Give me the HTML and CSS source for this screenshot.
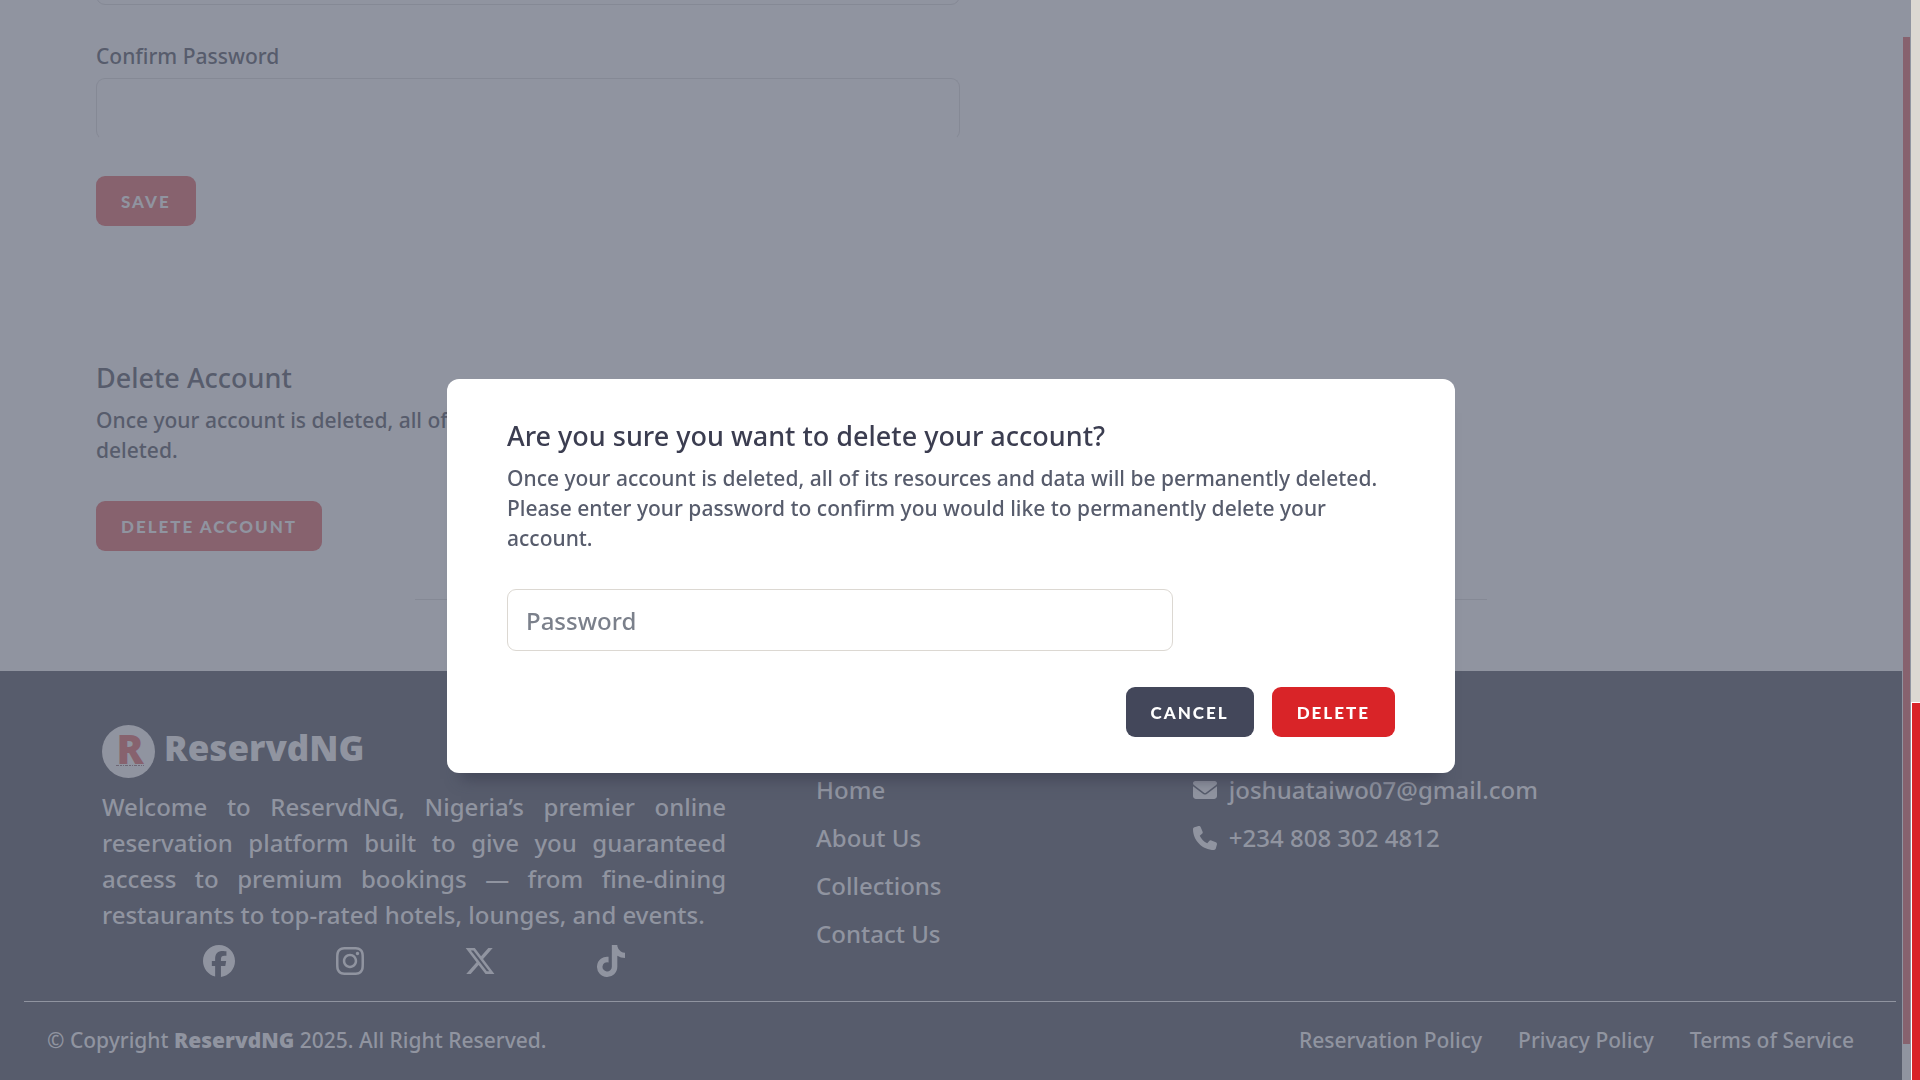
FILE: index.html
```html
<!DOCTYPE html>
<html lang="en">
<head>
<meta charset="utf-8">
<title>ReservdNG - Profile</title>
<link rel="stylesheet" href="styles.css">
</head>
<body>
<div class="shell">
  <div class="page">
    <main class="content">
      <form class="section">
        <input class="field" type="password" aria-label="New Password">
        <label class="label" for="confirm-password">Confirm Password</label>
        <input class="field open" id="confirm-password" type="password">
        <button class="btn muted" type="button">SAVE</button>
      </form>
      <section class="section">
        <h2 class="title">Delete Account</h2>
        <p class="copy">Once your account is deleted, all of its resources and data will be permanently deleted.</p>
        <button class="btn muted" type="button">DELETE ACCOUNT</button>
      </section>
      <hr class="divider">
    </main>
    <footer class="footer">
      <div class="columns">
        <div class="about">
          <a class="brand" href="#">
            <svg class="logo" viewBox="0 0 53 53" aria-hidden="true"><circle cx="26.500" cy="26.500" r="26.500" fill="#9094a0"/><text class="logo-letter" x="28" y="39" text-anchor="middle">R</text><path d="M14 40.500h28" stroke="#6d6775" stroke-dasharray="3 1 2 1 1 1"/></svg>
            <span>ReservdNG</span>
          </a>
          <p class="blurb">Welcome to ReservdNG, Nigeria’s premier online reservation platform built to give you guaranteed access to premium bookings — from fine-dining restaurants to top-rated hotels, lounges, and events.</p>
          <nav class="social" aria-label="Social">
            <a href="#" aria-label="Facebook"><svg viewBox="0 0 512 512"><path d="M512 256C512 114.600 397.400 0 256 0S0 114.600 0 256c0 120 82.700 220.800 194.200 248.500V334.200h-52.800V256h52.800v-33.700c0-87.100 39.400-127.500 125-127.500 16.200 0 44.200 3.200 55.700 6.400V172c-6-.6-16.500-1-29.600-1-42 0-58.200 15.900-58.200 57.200V256h83.600l-14.400 78.200H287V510C413.800 494.800 512 386.900 512 256z"/></svg></a>
            <a href="#" aria-label="Instagram"><svg viewBox="0 0 448 512"><path d="M224.100 141c-63.600 0-114.900 51.300-114.900 114.900s51.300 114.900 114.900 114.900S339 319.500 339 255.900 287.700 141 224.100 141zm0 189.600c-41.100 0-74.700-33.500-74.700-74.700s33.500-74.700 74.700-74.700 74.700 33.500 74.700 74.700-33.600 74.700-74.700 74.700zm146.400-194.300c0 14.900-12 26.800-26.800 26.800-14.900 0-26.800-12-26.800-26.800s12-26.800 26.800-26.800 26.800 12 26.800 26.800zm76.100 27.200c-1.700-35.900-9.900-67.700-36.200-93.900-26.200-26.200-58-34.400-93.900-36.200-37-2.100-147.900-2.100-184.900 0-35.800 1.700-67.600 9.900-93.900 36.100s-34.400 58-36.200 93.900c-2.100 37-2.100 147.900 0 184.900 1.700 35.900 9.900 67.700 36.200 93.900s58 34.400 93.900 36.200c37 2.100 147.900 2.100 184.900 0 35.900-1.700 67.700-9.900 93.900-36.200 26.200-26.200 34.400-58 36.200-93.900 2.100-37 2.100-147.800 0-184.800zM398.800 388c-7.800 19.600-22.900 34.700-42.600 42.600-29.500 11.700-99.500 9-132.100 9s-102.700 2.600-132.100-9c-19.600-7.800-34.700-22.900-42.600-42.600-11.700-29.500-9-99.500-9-132.100s-2.600-102.700 9-132.100c7.800-19.600 22.900-34.700 42.600-42.600 29.500-11.700 99.500-9 132.100-9s102.700-2.600 132.100 9c19.600 7.800 34.700 22.900 42.600 42.600 11.700 29.500 9 99.500 9 132.100s2.700 102.700-9 132.100z"/></svg></a>
            <a href="#" aria-label="X"><svg viewBox="0 0 512 512"><path d="M389.200 48h70.600L305.600 224.200 487 464H345L233.700 318.600 106.500 464H35.800L200.700 275.500 26.800 48H172.400L272.900 180.900 389.200 48zM364.400 421.800h39.100L151.100 88h-42L364.400 421.800z"/></svg></a>
            <a href="#" aria-label="TikTok"><svg viewBox="0 0 448 512"><path d="M448 209.900a210.100 210.100 0 0 1-122.800-39.300V349.400A162.600 162.600 0 1 1 185 188.300v89.900a74.600 74.600 0 1 0 52.200 71.200V0h88a121.200 121.200 0 0 0 1.900 22.200 122.200 122.200 0 0 0 53.900 80.200 121.400 121.400 0 0 0 67 20.100z"/></svg></a>
          </nav>
        </div>
        <nav class="links" aria-label="Site">
          <a href="#">Home</a>
          <a href="#">About Us</a>
          <a href="#">Collections</a>
          <a href="#">Contact Us</a>
        </nav>
        <address class="links">
          <a href="#"><svg viewBox="0 0 512 512" aria-hidden="true"><path d="M48 64C21.500 64 0 85.500 0 112c0 15.100 7.100 29.300 19.200 38.400L236.800 313.600c11.400 8.500 27 8.500 38.400 0L492.800 150.400c12.100-9.100 19.200-23.300 19.200-38.400 0-26.500-21.500-48-48-48H48zM0 176V384c0 35.300 28.700 64 64 64H448c35.300 0 64-28.700 64-64V176L294.400 339.200c-22.800 17.100-54 17.100-76.800 0L0 176z"/></svg>joshuataiwo07@gmail.com</a>
          <a href="#"><svg viewBox="0 0 512 512" aria-hidden="true"><path d="M164.900 24.600c-7.700-18.600-28-28.500-47.400-23.200l-88 24C12.100 30.200 0 46 0 64 0 311.400 200.600 512 448 512c18 0 33.800-12.100 38.600-29.500l24-88c5.300-19.400-4.600-39.700-23.200-47.400l-96-40c-16.300-6.800-35.200-2.100-46.300 11.600L304.700 368C234.300 334.700 177.300 277.700 144 207.300L193.300 167c13.700-11.200 18.400-30 11.600-46.300l-40-96z"/></svg>+234 808 302 4812</a>
        </address>
      </div>
      <div class="legal">
        <span>© Copyright <strong>ReservdNG</strong> 2025. All Right Reserved.</span>
        <nav class="policies" aria-label="Policies">
          <a href="#">Reservation Policy</a>
          <a href="#">Privacy Policy</a>
          <a href="#">Terms of Service</a>
        </nav>
      </div>
    </footer>
  </div>
  <div class="rail inner" aria-hidden="true"><div class="thumb"></div></div>
  <div class="rail outer" aria-hidden="true"><div class="thumb"></div></div>
</div>
<div class="overlay">
  <form class="modal" role="dialog" aria-labelledby="modal-title">
    <h2 class="title" id="modal-title">Are you sure you want to delete your account?</h2>
    <p class="copy">Once your account is deleted, all of its resources and data will be permanently deleted. Please enter your password to confirm you would like to permanently delete your account.</p>
    <input class="field" type="password" placeholder="Password" aria-label="Password">
    <div class="actions">
      <button class="btn dark" type="button">CANCEL</button>
      <button class="btn danger" type="button">DELETE</button>
    </div>
  </form>
</div>
</body>
</html>
```
FILE: styles.css
```css
* { box-sizing: border-box; }
body {
  margin: 0;
  overflow: hidden;
  font-family: "Noto Sans", sans-serif;
  font-size: 24px;
  font-weight: 500;
  line-height: 36px;
  color: #575c6c;
  background: #9094a0;
}
h2, p { margin: 0; }
a { color: inherit; text-decoration: none; }
svg { display: block; fill: currentColor; }

.shell { display: flex; height: 100vh; }

/* The page is scrolled to its end, so it hangs from the bottom edge. */
.page {
  flex: 1;
  min-width: 0;
  display: flex;
  flex-direction: column;
  justify-content: flex-end;
  overflow: hidden;
}
.content {
  display: flex;
  flex-direction: column;
  gap: 131px;
  padding: 0 96px 71px;
}
.section {
  display: flex;
  flex-direction: column;
  align-items: flex-start;
  max-width: 864px;
}
.label {
  margin: 36px 0 7px;
  font-size: 21px;
  line-height: 30px;
}
.field {
  width: 100%;
  height: 62px;
  padding: 12px 18px;
  border: 1px solid #858995;
  border-radius: 9px;
  font: inherit;
  color: inherit;
  background: transparent;
}
.field.open { border-bottom-color: transparent; }
.title {
  font-size: 27px;
  font-weight: 500;
  line-height: 42px;
}
.copy {
  margin-top: 6px;
  font-size: 21px;
  line-height: 30px;
}
.btn {
  height: 50px;
  padding: 0 24px;
  border: 1px solid transparent;
  border-radius: 9px;
  font-family: Lato, sans-serif;
  font-size: 17px;
  font-weight: 900;
  letter-spacing: 2px;
  color: #fff;
}
.section .btn { margin-top: 36px; }
.muted { background: #87626e; color: #9094a0; }
.dark { background: #43475a; }
.danger { background: #d92428; }
.divider {
  width: 1072px;
  max-width: 100%;
  margin: -83px auto 0;
  border: 0;
  border-top: 1px solid #858995;
}

.footer {
  padding: 54px 6px 0 24px;
  background: #575c6c;
  color: #9094a0;
}
.columns {
  display: grid;
  grid-template-columns: 37fr 17fr 36fr;
  gap: 90px;
  padding: 0 96px 24px 78px;
}
.about { display: flex; flex-direction: column; }
.brand {
  display: flex;
  align-items: flex-start;
  gap: 9px;
  font-size: 35px;
  font-weight: 900;
  line-height: 46px;
}
.logo { width: 53px; height: 53px; }
.logo-letter { font-size: 40px; fill: #87626e; }
.blurb { margin: 11px 0 12px; text-align: justify; }
.social { display: flex; justify-content: space-evenly; }
.social svg { height: 32px; }
.links {
  display: flex;
  flex-direction: column;
  gap: 12px;
  padding-top: 47px;
  font-style: normal;
}
.links a { display: flex; align-items: center; gap: 12px; }
.links svg { width: 24px; height: 24px; }
.legal {
  display: flex;
  justify-content: space-between;
  align-items: center;
  height: 79px;
  padding: 0 42px 2px 23px;
  border-top: 1px solid #9094a0;
  font-size: 21px;
}
.legal strong { font-weight: 900; }
.policies { display: flex; gap: 36px; }

.rail { width: 9px; }
.inner {
  padding: 37px 1px 36px;
  background: #9094a0;
}
.inner .thumb { height: 100%; background: #87626e; }
.outer {
  display: flex;
  flex-direction: column;
  justify-content: flex-end;
  background: #dcd8d2;
}
.outer .thumb {
  height: 35%;
  border: solid #fff;
  border-width: 1px 0 0 1px;
  background: #d92428;
}

.overlay {
  position: fixed;
  inset: 0 18px 0 0;
  display: flex;
  align-items: center;
  justify-content: center;
  padding-top: 72px;
}
.modal {
  width: 1008px;
  max-width: 100%;
  padding: 36px 60px;
  border-radius: 12px;
  background: #fff;
  box-shadow: 0 20px 14px -14px rgba(59, 61, 80, 0.7);
}
.modal .title { color: #3b3d50; }
.modal .field {
  display: block;
  width: 666px;
  max-width: 100%;
  margin: 36px 0;
  border-color: #dcd8d2;
}
.modal .field::placeholder { color: #7b808b; opacity: 1; }
.actions { display: flex; justify-content: flex-end; gap: 18px; }
```
